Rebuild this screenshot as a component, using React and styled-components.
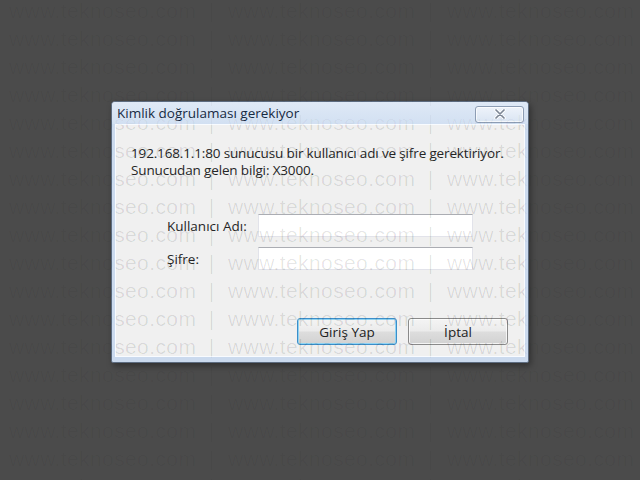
import styled, { createGlobalStyle } from 'styled-components'

const GlobalStyle = createGlobalStyle`
  html, body {
    margin: 0;
    padding: 0;
    background: #4b4b4b;
  }
  #root {
    width: 640px;
    height: 480px;
    position: relative;
    overflow: hidden;
  }
`

const Desktop = styled.div`
  width: 640px;
  height: 480px;
  box-sizing: border-box;
  padding-top: 101px;
  display: flex;
  justify-content: center;
  align-items: flex-start;
`

const Window = styled.div`
  width: 418px;
  height: 262px;
  box-sizing: border-box;
  display: flex;
  flex-direction: column;
  border: 1px solid #5d6c80;
  border-radius: 4px 4px 2px 2px;
  background: #cbdaee;
  padding: 0 3px 5px;
  box-shadow: 2px 3px 6px rgba(0, 0, 0, 0.35);
`

const TitleBar = styled.div`
  height: 22px;
  display: flex;
  align-items: center;
  justify-content: space-between;
  background: linear-gradient(#dfe9f6, #d2e0f2);
  margin: 0 -3px;
  padding: 0 4px 0 5px;
  border-radius: 3px 3px 0 0;
  font-family: 'Open Sans', 'Noto Sans', sans-serif;
  font-size: 13.5px;
  color: #172a42;
`

const CloseButton = styled.div`
  width: 49px;
  height: 17px;
  margin-top: 2px;
  box-sizing: border-box;
  display: flex;
  align-items: center;
  justify-content: center;
  border: 1px solid #8d9db4;
  border-radius: 3px;
  background: linear-gradient(#eef3fa, #dae5f3);
  box-shadow: inset 0 0 0 1px rgba(255, 255, 255, 0.7);
`

const Body = styled.div`
  position: relative;
  overflow: hidden;
  flex: 1;
  display: flex;
  flex-direction: column;
  background: #f0f0f0;
  border: 1px solid #f8fbff;
  padding: 20px 16px 11px 15px;
  font-family: 'Open Sans', 'Noto Sans', sans-serif;
  font-size: 13.5px;
  color: #262626;
`

const Message = styled.p`
  margin: 0;
  line-height: 17px;
  letter-spacing: -0.15px;
`

const Form = styled.div`
  margin-top: 35px;
  display: flex;
  flex-direction: column;
  gap: 10px;
`

const Row = styled.label`
  display: flex;
  align-items: center;
  padding-left: 36px;
`

const Label = styled.span`
  width: 91px;
`

const Field = styled.input`
  width: 215px;
  height: 23px;
  box-sizing: border-box;
  margin: 0;
  border: 1px solid #e2e3ea;
  border-top-color: #abadb3;
  background: #fff;
  outline: none;
`

const Actions = styled.div`
  margin-top: auto;
  display: flex;
  justify-content: flex-end;
  gap: 11px;
`

const Button = styled.button`
  width: 100px;
  height: 27px;
  box-sizing: border-box;
  border-radius: 3px;
  border: 1px solid ${(props) => (props.focused ? '#3c8ec9' : '#8a8a8a')};
  background: linear-gradient(#f4f4f4 0%, #ebebeb 48%, #dddddd 52%, #d2d2d2 100%);
  box-shadow: inset 0 0 0 1px
    ${(props) => (props.focused ? '#8fd3f3' : 'rgba(255, 255, 255, 0.75)')};
  font-family: 'Open Sans', 'Noto Sans', sans-serif;
  font-size: 13.5px;
  color: #222;
  padding: 0;
`

/* tiled site stamp laid over the page and, stronger, over the dialog body */
const Watermark = styled.div`
  position: absolute;
  inset: 0;
  pointer-events: none;
  overflow: hidden;
`

const MarkTrack = styled.div`
  margin-top: ${(props) => props.top}px;
  margin-left: ${(props) => props.left}px;
`

const MarkRow = styled.div`
  height: 28px;
  line-height: 28px;
  white-space: nowrap;
  display: flex;
`

const MarkUnit = styled.span`
  flex: none;
  width: 219px;
  font-family: 'Liberation Sans', Arial, sans-serif;
  font-size: 21px;
  letter-spacing: 0.4px;
  color: rgba(0, 0, 0, ${(props) => props.alpha});
`

function Stamp({ top, left, rows, alpha }) {
  return (
    <Watermark>
      <MarkTrack top={top} left={left}>
        {Array.from({ length: rows }).map((_, i) => (
          <MarkRow key={i}>
            {Array.from({ length: 5 }).map((_, j) => (
              <MarkUnit key={j} alpha={alpha}>
                www.teknoseo.com&nbsp;&nbsp;|
              </MarkUnit>
            ))}
          </MarkRow>
        ))}
      </MarkTrack>
    </Watermark>
  )
}

function CloseGlyph() {
  return (
    <svg width="12" height="10" viewBox="0 0 12 10">
      <path
        d="M2 1 L10 9 M10 1 L2 9"
        stroke="#fff"
        strokeWidth="3.4"
        strokeLinecap="round"
      />
      <path
        d="M2 1 L10 9 M10 1 L2 9"
        stroke="#7d8796"
        strokeWidth="1.7"
        strokeLinecap="round"
      />
    </svg>
  )
}

export default function App() {
  return (
    <>
      <GlobalStyle />
      <Desktop>
        <Window>
          <TitleBar>
            <span>Kimlik doğrulaması gerekiyor</span>
            <CloseButton>
              <CloseGlyph />
            </CloseButton>
          </TitleBar>
          <Body>
            <Message>
              192.168.1.1:80 sunucusu bir kullanıcı adı ve şifre gerektiriyor.
              <br />
              Sunucudan gelen bilgi: X3000.
            </Message>
            <Form>
              <Row>
                <Label>Kullanıcı Adı:</Label>
                <Field type="text" />
              </Row>
              <Row>
                <Label>Şifre:</Label>
                <Field type="password" />
              </Row>
            </Form>
            <Actions>
              <Button focused>Giriş Yap</Button>
              <Button>İptal</Button>
            </Actions>
            <Stamp top={-16} left={-107} rows={9} alpha={0.07} />
          </Body>
        </Window>
      </Desktop>
      <Stamp top={-3} left={-210} rows={18} alpha={0.035} />
    </>
  )
}
